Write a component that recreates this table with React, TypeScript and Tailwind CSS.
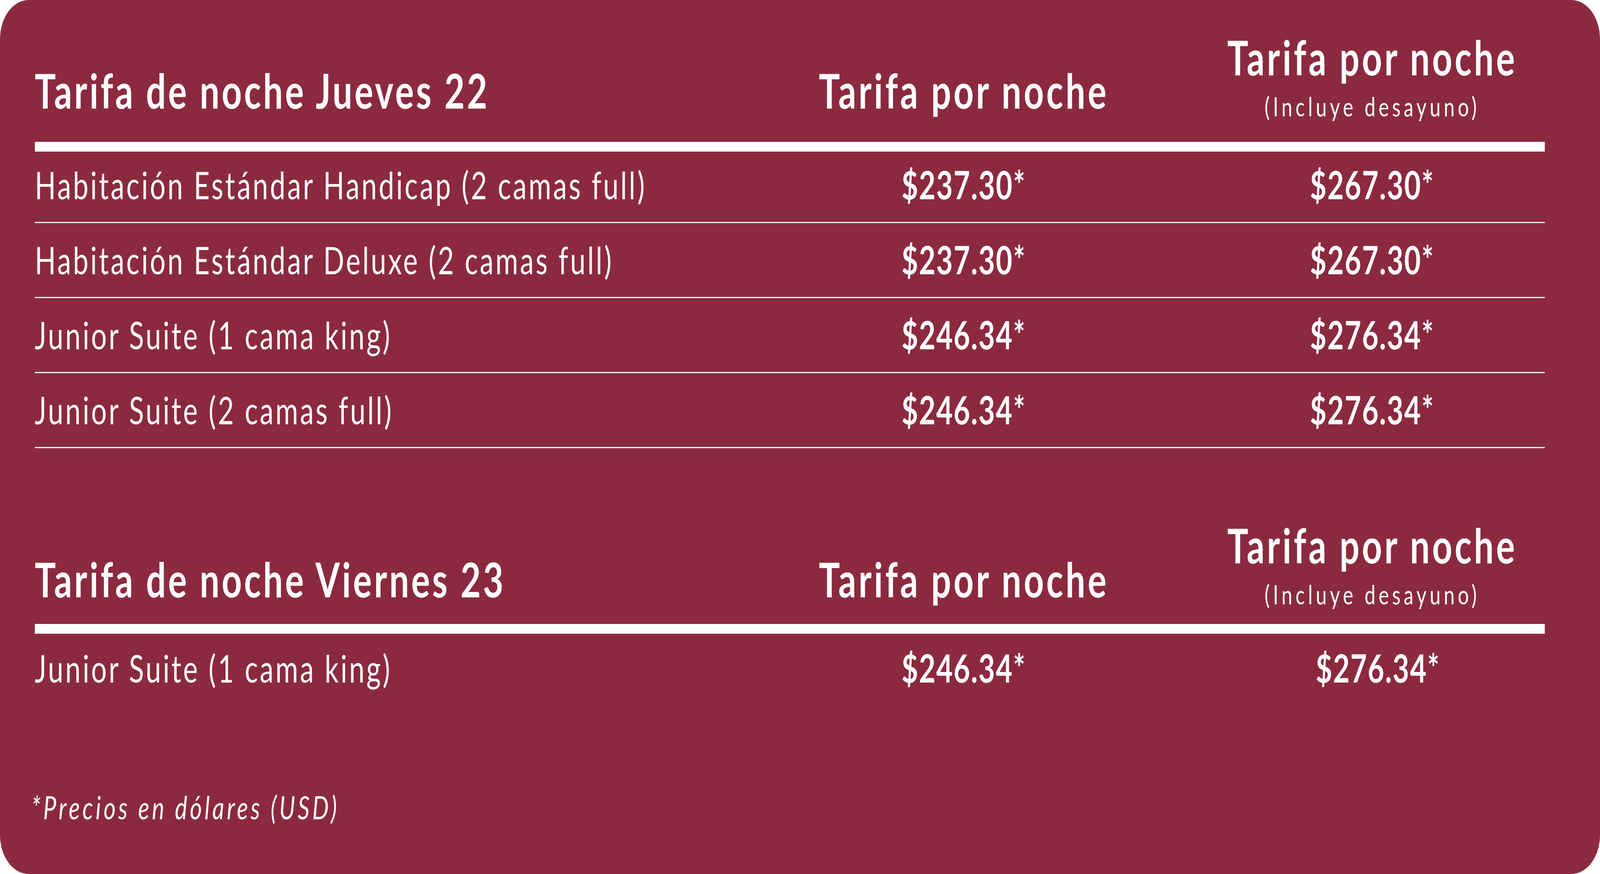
import React, { useState } from "react";

const rows1: [string, string, string][] = [
  ["Habitación Estándar Handicap (2 camas full)", "$237.30*", "$267.30*"],
  ["Habitación Estándar Deluxe (2 camas full)", "$237.30*", "$267.30*"],
  ["Junior Suite (1 cama king)", "$246.34*", "$276.34*"],
  ["Junior Suite (2 camas full)", "$246.34*", "$276.34*"],
];

function Header({ title, tight }: { title: string; tight?: boolean }) {
  return (
    <div className="grid grid-cols-[minmax(0,1fr)_1200px_1200px] gap-x-[220px] items-end">
      <div
        className={`text-[122px] leading-none font-bold tracking-[7.6px] whitespace-nowrap ${
          tight ? "pb-[54px]" : "pb-[71px]"
        }`}
      >
        {title}
      </div>
      <div
        className={`text-[122px] leading-none font-bold tracking-[8.2px] text-center whitespace-nowrap ${
          tight ? "pb-[54px]" : "pb-[71px]"
        }`}
      >
        Tarifa por noche
      </div>
      <div className={`flex flex-col items-center ${tight ? "pb-[42px]" : "pb-[57px]"}`}>
        <div className="text-[122px] leading-none font-bold tracking-[8.2px] whitespace-nowrap">Tarifa por noche</div>
        <div className="text-[68px] leading-none font-normal tracking-[11px] mt-[31px] whitespace-nowrap">
          (Incluye desayuno)
        </div>
      </div>
    </div>
  );
}

function Row({
  name,
  p1,
  p2,
  first,
  last,
  shift,
}: {
  name: string;
  p1: string;
  p2: string;
  first?: boolean;
  last?: boolean;
  shift?: boolean;
}) {
  return (
    <div
      className={`grid grid-cols-[minmax(0,1fr)_1200px_1200px] gap-x-[220px] items-end pb-[47px] ${
        first ? "h-[183px]" : "h-[192px]"
      } ${last ? "" : "border-b-[3px] border-white"}`}
    >
      <div className="text-[96px] leading-none font-normal tracking-[6.6px] whitespace-nowrap">{name}</div>
      <div className="text-[99px] leading-none font-bold tracking-[2.8px] text-center whitespace-nowrap">{p1}</div>
      <div
        className={`text-[99px] leading-none font-bold tracking-[2.8px] text-center whitespace-nowrap ${
          shift ? "pl-[40px]" : ""
        }`}
      >
        {p2}
      </div>
    </div>
  );
}

export default function App() {
  const [sx] = useState(() => (typeof window !== "undefined" ? Math.min(1, window.innerWidth / 5563) : 1));
  return (
    <div className="w-screen h-screen overflow-hidden bg-white">
      <div className="w-[5563px] h-[2237px] origin-top-left" style={{ transform: `scaleX(${sx})` }}>
        <div className="w-[5563px] h-[2237px] bg-[#8b2a3e] rounded-[100px] pl-[121px] pr-[192px] pt-[85px] text-white font-['Lato',sans-serif] overflow-hidden">
          <Header title="Tarifa de noche Jueves 22" />
          <div className="h-[25px] bg-white" />
          {rows1.map((r, i) => (
            <Row key={i} name={r[0]} p1={r[1]} p2={r[2]} first={i === 0} />
          ))}
          <div className="mt-[187px]">
            <Header title="Tarifa de noche Viernes 23" tight />
          </div>
          <div className="h-[25px] bg-white" />
          <Row name="Junior Suite (1 cama king)" p1="$246.34*" p2="$276.34*" first last shift />
          <div className="mt-[220px] -ml-[12px] text-[81px] leading-none font-normal italic tracking-[9px]">
            *Precios en dólares (USD)
          </div>
        </div>
      </div>
    </div>
  );
}
